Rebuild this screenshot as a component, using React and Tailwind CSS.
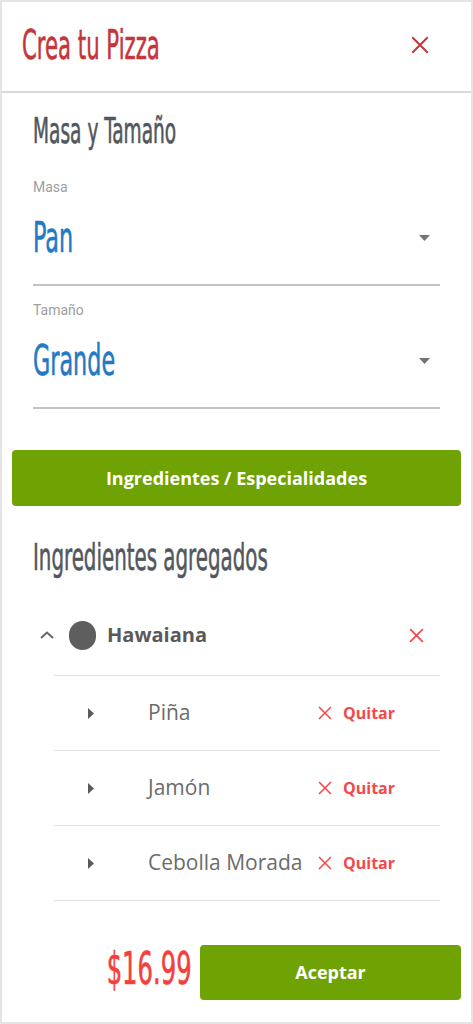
import React, { useState } from "react";

const narrow =
  "font-['Liberation_Sans_Narrow','DejaVu_Sans_Condensed',sans-serif] [-webkit-text-stroke:0.6px_currentColor]";
const sans = "font-['Open_Sans','Noto_Sans',sans-serif]";

const CloseIcon = ({ className, size = 18, stroke = 2 }) => (
  <svg
    width={size}
    height={size}
    viewBox="0 0 18 18"
    className={className}
    fill="none"
    stroke="currentColor"
    strokeWidth={stroke}
    strokeLinecap="square"
  >
    <path d="M2 2L16 16M16 2L2 16" />
  </svg>
);

const SelectField = ({ label, value }) => (
  <div className="pt-[14px] border-b-2 border-[#c2c2c2]">
    <div className="h-5 leading-5 text-[14px] text-[#9e9e9e] font-['Roboto',sans-serif]">
      {label}
    </div>
    <div className="mt-[11px] mb-[16px] h-[60px] flex items-center justify-between">
      <span
        className={`${narrow} inline-block origin-left scale-x-[0.59] text-[42px] leading-none text-[#2479c4]`}
      >
        {value}
      </span>
      <svg width="11" height="6" viewBox="0 0 11 6" className="mr-[10px]">
        <path d="M0 0H11L5.5 6Z" fill="#737373" />
      </svg>
    </div>
  </div>
);

const IngredientRow = ({ name }) => (
  <div className="h-[75px] flex items-center border-b border-[#e3e3e3]">
    <svg width="6" height="11" viewBox="0 0 6 11" className="ml-[34px]">
      <path d="M0 0L6 5.5L0 11Z" fill="#5a5a5a" />
    </svg>
    <span className={`${sans} ml-[54px] text-[21px] text-[#6b6b6b] w-[170px] whitespace-nowrap`}>
      {name}
    </span>
    <button className="flex items-center gap-[11px] text-[#f4494a]">
      <CloseIcon size={14} stroke={2} />
      <span className={`${sans} font-bold text-[16px]`}>Quitar</span>
    </button>
  </div>
);

export default function App() {
  const [ingredients] = useState(["Piña", "Jamón", "Cebolla Morada"]);

  return (
    <div className="w-[473px] h-[1024px] bg-white border-2 border-[#e4e4e4] flex flex-col">
      <header className="h-[91px] shrink-0 flex items-center justify-between pl-[20px] pr-[42px] pb-[4px] border-b-2 border-[#d9d9d9]">
        <h1
          className={`${narrow} inline-block origin-left scale-x-[0.59] text-[40px] leading-none text-[#c3363c] whitespace-nowrap`}
        >
          Crea tu Pizza
        </h1>
        <CloseIcon className="text-[#c3363c]" size={18} stroke={2} />
      </header>

      <main className="flex-1 px-[10px]">
        <div className="px-[21px]">
          <h2
            className={`${narrow} mt-[18px] h-[40px] flex items-center text-[35px] text-[#51575c]`}
          >
            <span className="inline-block origin-left scale-x-[0.59] whitespace-nowrap">
              Masa y Tamaño
            </span>
          </h2>
          <div className="mt-[12px]">
            <SelectField label="Masa" value="Pan" />
            <SelectField label="Tamaño" value="Grande" />
          </div>
        </div>

        <button
          className={`${sans} mt-[41px] w-full h-[56px] rounded-[4px] bg-[#6fa303] text-white font-bold text-[18px]`}
        >
          Ingredientes / Especialidades
        </button>

        <div className="px-[21px]">
          <h2
            className={`${narrow} mt-[31px] h-[40px] flex items-center text-[38px] text-[#51575c]`}
          >
            <span className="inline-block origin-left scale-x-[0.58] whitespace-nowrap">
              Ingredientes agregados
            </span>
          </h2>
        </div>

        {/* especialidad seleccionada */}
        <div className="mt-[18px] h-[80px] flex items-center pl-[28px] pr-[37px]">
          <svg width="14" height="8" viewBox="0 0 14 8" fill="none" stroke="#666" strokeWidth="2">
            <path d="M1 7L7 1.5L13 7" />
          </svg>
          <div className="ml-[15px] w-[27px] h-[29px] rounded-full bg-[#5e5e5e]" />
          <span className={`${sans} ml-[11px] font-bold text-[20px] text-[#595959] flex-1`}>
            Hawaiana
          </span>
          <CloseIcon className="text-[#f4494a]" size={15} stroke={2} />
        </div>

        <div className="ml-[42px] mr-[21px] border-t border-[#e3e3e3]">
          {ingredients.map((item) => (
            <IngredientRow key={item} name={item} />
          ))}
        </div>

        <div className="mt-[44px] flex items-center justify-end gap-[8px]">
          <span
            className={`${narrow} inline-block origin-right scale-x-[0.6] pb-[8px] text-[45px] leading-none text-[#f4403d]`}
          >
            $16.99
          </span>
          <button
            className={`${sans} w-[261px] h-[55px] rounded-[4px] bg-[#6fa303] text-white font-bold text-[18px]`}
          >
            Aceptar
          </button>
        </div>
      </main>
    </div>
  );
}
